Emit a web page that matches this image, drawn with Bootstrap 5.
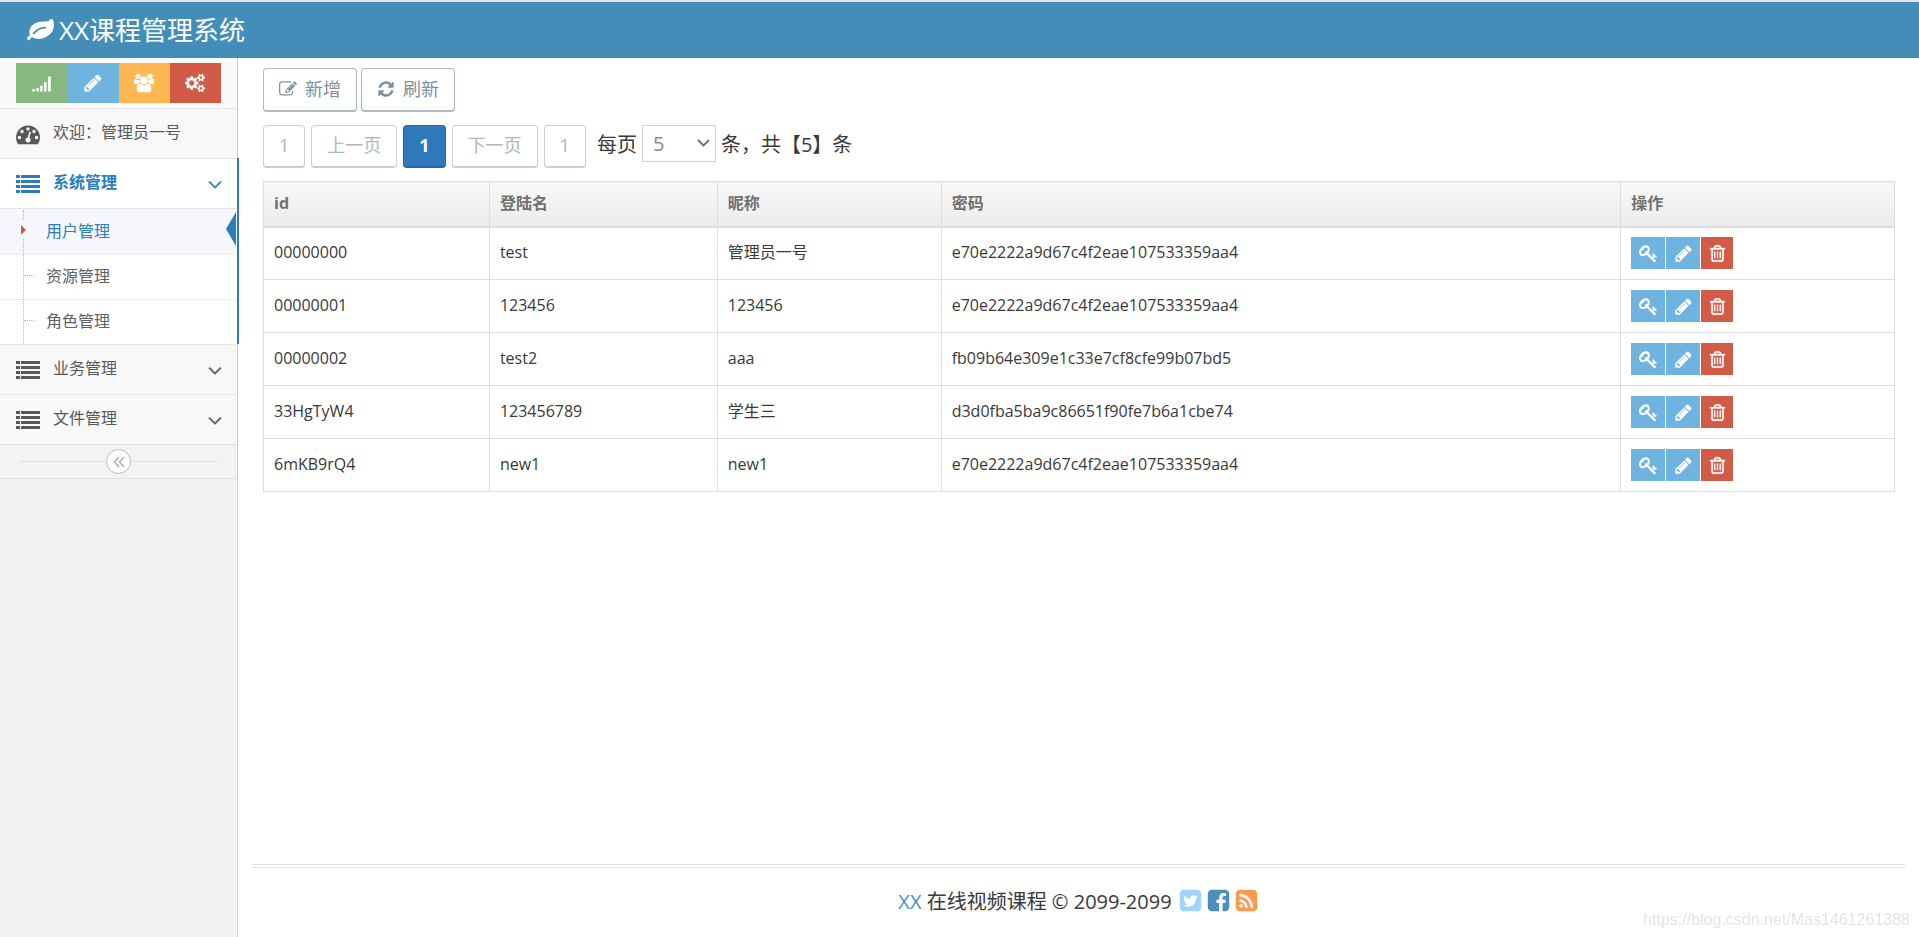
<!DOCTYPE html>
<html lang="zh-CN">
<head>
<meta charset="utf-8">
<meta name="viewport" content="width=device-width, initial-scale=1">
<title>XX课程管理系统</title>
<link href="https://cdn.jsdelivr.net/npm/bootstrap@5.3.0/dist/css/bootstrap.min.css" rel="stylesheet">
<style>
body{font-family:"Open Sans","Noto Sans CJK SC",sans-serif;font-size:16px;line-height:24px;color:#393939;background:#fff}
.ico{width:1em;height:1em;fill:currentColor;flex:none;display:block}
.topbar{background:#438eb9;border-top:2px solid #e4e6e9;height:58px;padding:0 27px}
.topbar .navbar-brand{font-size:26px;line-height:36px;color:#fff;gap:5px}
.topbar .ico{font-size:27px}

/* sidebar */
.side{width:238px;background:#f2f2f2;border-right:1px solid #ccc}
.shortcuts{background:#fafafa;padding:5px 16px;height:50px}
.shortcuts .btn{border:0;border-radius:0;color:#fff;font-size:20px}
.b-green{background:#87b87f}.b-blue{background:#6fb3e0}.b-orange{background:#ffb752}.b-red{background:#d15b47}
.side-link{height:50px;padding:0 16px;gap:13px;border-top:1px solid #e5e5e5;background:#f8f8f8;color:#585858;text-decoration:none}
.side-link span{padding-bottom:4px}
.side-link .ico{font-size:24px}
.side-link .caret{font-size:20px;margin-right:-4px}
.side-open{position:relative}
.side-open::after{content:"";position:absolute;top:0;bottom:0;right:-2px;width:2px;background:#2b7dbc}
.side-open>.side-link{background:#fff;color:#2b7dbc;font-weight:700}
.submenu{position:relative;background:#fff;border-top:1px solid #e5e5e5}
.submenu::before{content:"";position:absolute;left:23px;top:1px;bottom:0;border-left:1px dotted #9dbdd6;z-index:1}
.submenu a{position:relative;display:block;height:45px;line-height:42px;padding-left:46px;color:#616161;text-decoration:none;border-top:1px dotted #e4e4e4}
.submenu li:first-child a{border-top-color:transparent}
.submenu a::before{content:"";position:absolute;left:24px;top:20px;width:10px;border-top:1px dotted #9dbdd6}
.submenu a.current{background:#f5f7fa;color:#2b7dbc}
.submenu a.current::before{left:18px;top:11px;width:10px;height:18px;border:0;background:#f5f7fa;z-index:2}
.mark-red{position:absolute;left:21px;top:15px;width:5px;height:10px;background:#c86139;clip-path:polygon(0 0,100% 50%,0 100%);z-index:3}
.mark-blue{position:absolute;right:1px;top:2px;width:10px;height:34px;background:#2b7dbc;clip-path:polygon(100% 0,100% 100%,0 50%)}
.side-toggle{height:35px;background:#f3f3f3;border-top:1px solid #e0e0e0;border-bottom:1px solid #e0e0e0;padding:0 19px}
.side-toggle::before,.side-toggle::after{content:"";flex:1;border-top:1px solid #e0e0e0}
.side-toggle button{width:25px;height:25px;border:1px solid #bbb;border-radius:50%;background:#fff;color:#aaa;padding:0}
.side-toggle .ico{font-size:12px}

/* content */
.page{padding:10px 24px 0 25px}
.btn-plain{height:44px;border:1px solid #abbac3;border-bottom-width:2px;border-radius:4px;background:#fff;color:#80909a;font-size:18px;line-height:24px;padding:0 15px 2px}
.btn-plain:hover{background:#ebeef0;color:#80909a;border-color:#abbac3}
.btn-plain.disabled,.btn-plain:disabled{opacity:.65;background:#fff;color:#80909a;border-color:#abbac3}
.btn-plain.now{background:#2e79ba;border-color:#2668a2;color:#fff;font-weight:700}
.pager{gap:6px;margin-top:13px}
.pager .btn-plain{height:43px}
.per-page{font-size:20px;line-height:40px;margin-left:5px;gap:5px}
.per-page select{width:74px;height:37px;border:1px solid #d5d5d5;border-radius:0;color:#858585;font-size:20px;line-height:24px;padding:0 10px;background-position:right 5px center;background-size:13px 13px;
background-image:url("data:image/svg+xml,%3csvg xmlns='http://www.w3.org/2000/svg' viewBox='0 0 13 13'%3e%3cpath fill='none' stroke='%23777' stroke-width='2' d='M1 3l5.5 5.500L12 3'/%3e%3c/svg%3e")}
.grid-table{margin:13px 0 0;border-color:#ddd;color:#393939;table-layout:fixed;--bs-table-color:#393939}
.grid-table th{height:45px;padding:0 10px 2px;background:linear-gradient(#f8f8f8,#ececec);color:#707070;font-weight:700;border-bottom:2px solid #ddd;vertical-align:middle}
.grid-table td{height:53px;padding:0 10px 2px;vertical-align:middle}
.grid-table td:last-child{padding-bottom:0}
.acts{gap:1px}
.acts .btn{width:34px;height:32px;border:0;border-radius:0;color:#fff;font-size:19px;padding:0}
.acts .b-red{width:32px}
.foot{margin:0 14px;border-top:4px double #e2e2e2;height:73px;padding-top:18px;font-size:20px;line-height:32px;gap:6px}
.foot b{font-weight:400;color:#478fca}
.foot .ico{font-size:25px}
.socials{gap:3px;padding-top:2px}
.watermark{position:fixed;right:9px;bottom:5px;font:16px/24px "Liberation Sans",sans-serif;color:#e4e4e4}
</style>
</head>
<body class="d-flex flex-column min-vh-100">
<svg class="d-none" aria-hidden="true">
<symbol id="i-leaf" viewBox="0 0 1792 1792"><path d="M1280 704q0-26-19-45t-45-19q-172 0-318 49.500t-259.500 134-235.500 219.500q-19 21-19 45 0 26 19 45t45 19q24 0 45-19 27-24 74-71t67-66q137-124 268.500-176t313.500-52q26 0 45-19t19-45zm512-198q0 95-20 193-46 224-184.500 383t-357.500 268q-214 108-438 108-148 0-286-47-15-5-88-42t-96-37q-16 0-39.500 32t-45 70-52.500 70-60 32q-43 0-63.500-17.500t-45.500-59.500q-2-4-6-11t-5.500-10-3-9.500-1.500-13.500q0-35 31-73.500t68-65.500 68-56 31-48q0-4-14-38t-16-44q-9-51-9-104 0-115 43.500-220t119-184.500 170.500-139 204-95.500q55-18 145-25.500t179.500-9 178.500-6 163.500-24 113.500-56.500l29.500-29.500 29.500-28 27-20 36.500-16 43.500-4.500q39 0 70.500 46t47.500 112 24 124 8 96z"/></symbol>
<symbol id="i-signal" viewBox="0 0 1792 1792"><path d="M32 1440h224v224H32zM382 1344h224v320H382zM732 1152h224v512H732zM1082 832h224v832h-224zM1432 320h256v1344h-256z"/></symbol>
<symbol id="i-pencil" viewBox="0 0 1792 1792"><path d="M491 1536l91-91-235-235-91 91v107h128v128h107zm523-928q0-22-22-22-10 0-17 7l-542 542q-7 7-7 17 0 22 22 22 10 0 17-7l542-542q7-7 7-17zm-54-192l416 416-832 832h-416v-416zm683 96q0 53-37 90l-166 166-416-416 166-165q36-38 90-38 53 0 91 38l235 234q37 39 37 91z"/></symbol>
<symbol id="i-users" viewBox="0 0 1920 1792"><path d="M593 896q-162 5-265 128h-134q-82 0-138-40.500t-56-118.500q0-353 124-353 6 0 43.500 21t97.500 42.500 119 21.500q67 0 133-23-5 37-5 66 0 159 93 293zm1071 637q0 120-73 189.500t-194 69.500h-874q-121 0-194-69.500t-73-189.500q0-53 3.500-103.500t14-109 26.500-108.500 43-97.500 62-81 85.500-53.500 111.500-20q10 0 43 21.500t73 48 107 48 135 21.500 135-21.500 107-48 73-48 43-21.500q61 0 111.500 20t85.500 53.500 62 81 43 97.500 26.500 108.500 14 109 3.500 103.500zm-1024-1277q0 106-75 181t-181 75-181-75-75-181 75-181 181-75 181 75 75 181zm704 384q0 159-112.500 271.500t-271.500 112.500-271.500-112.500-112.500-271.500 112.500-271.500 271.500-112.500 271.500 112.500 112.500 271.500zm576 225q0 78-56 118.500t-138 40.500h-134q-103-123-265-128 93-134 93-293 0-29-5-66 66 23 133 23 59 0 119-21.500t97.500-42.500 43.500-21q124 0 124 353zm-128-609q0 106-75 181t-181 75-181-75-75-181 75-181 181-75 181 75 75 181z"/></symbol>
<symbol id="i-cogs" viewBox="0 0 1920 1792"><path d="M896 896q0-106-75-181t-181-75-181 75-75 181 75 181 181 75 181-75 75-181zm768 512q0-52-38-90t-90-38-90 38-38 90q0 53 37.500 90.500t90.500 37.500 90.500-37.500 37.500-90.500zm0-1024q0-52-38-90t-90-38-90 38-38 90q0 53 37.500 90.500t90.500 37.500 90.500-37.500 37.500-90.500zm-384 421v185q0 10-7 19.500t-16 10.500l-155 24q-11 35-32 76 34 48 90 115 7 11 7 20 0 12-7 19-23 30-82.500 89.500t-78.500 59.500q-11 0-21-7l-115-90q-37 19-77 31-11 108-23 155-7 24-30 24h-186q-11 0-20-7.500t-10-17.500l-23-153q-34-10-75-31l-118 89q-7 7-20 7-11 0-21-8-144-133-144-160 0-9 7-19 10-14 41-53t47-61q-23-44-35-82l-152-24q-10-1-17-9.500t-7-19.500v-185q0-10 7-19.500t16-10.500l155-24q11-35 32-76-34-48-90-115-7-11-7-20 0-12 7-20 22-30 82-89t79-59q11 0 21 7l115 90q34-18 77-32 11-108 23-154 7-24 30-24h186q11 0 20 7.500t10 17.500l23 153q34 10 75 31l118-89q8-7 20-7 11 0 21 8 144 133 144 160 0 8-7 19-12 16-42 54t-45 60q23 48 34 82l152 23q10 2 17 10.500t7 19.500zm640 533v140q0 16-149 31-12 27-30 52 51 113 51 138 0 4-4 7-122 71-124 71-8 0-46-47t-52-68q-20 2-30 2t-30-2q-14 21-52 68t-46 47q-2 0-124-71-4-3-4-7 0-25 51-138-18-25-30-52-149-15-149-31v-140q0-16 149-31 13-29 30-52-51-113-51-138 0-4 4-7 4-2 35-20t59-34 30-16q8 0 46 46.500t52 67.500q20-2 30-2t30 2q51-71 92-112l6-2q4 0 124 70 4 3 4 7 0 25-51 138 17 23 30 52 149 15 149 31zm0-1024v140q0 16-149 31-12 27-30 52 51 113 51 138 0 4-4 7-122 71-124 71-8 0-46-47t-52-68q-20 2-30 2t-30-2q-14 21-52 68t-46 47q-2 0-124-71-4-3-4-7 0-25 51-138-18-25-30-52-149-15-149-31v-140q0-16 149-31 13-29 30-52-51-113-51-138 0-4 4-7 4-2 35-20t59-34 30-16q8 0 46 46.500t52 67.500q20-2 30-2t30 2q51-71 92-112l6-2q4 0 124 70 4 3 4 7 0 25-51 138 17 23 30 52 149 15 149 31z"/></symbol>
<symbol id="i-gauge" viewBox="0 0 1792 1792"><path d="M384 1152q0-53-37.500-90.500t-90.500-37.500-90.500 37.500-37.500 90.500 37.500 90.500 90.500 37.500 90.500-37.500 37.500-90.500zm192-448q0-53-37.500-90.500t-90.500-37.500-90.500 37.500-37.500 90.500 37.500 90.500 90.500 37.500 90.500-37.500 37.500-90.500zm428 481l101-382q6-26-7.500-48.500t-38.500-29.500-48 6.500-30 39.500l-101 382q-60 5-107 43.500t-63 98.500q-20 77 20 146t117 89 146-20 89-117q16-60-6-117t-72-91zm660-33q0-53-37.500-90.500t-90.500-37.500-90.500 37.500-37.500 90.500 37.500 90.500 90.500 37.500 90.500-37.500 37.500-90.500zm-640-640q0-53-37.500-90.500t-90.500-37.500-90.500 37.500-37.500 90.500 37.500 90.500 90.500 37.500 90.500-37.500 37.500-90.500zm448 192q0-53-37.500-90.500t-90.500-37.500-90.500 37.500-37.500 90.500 37.500 90.500 90.500 37.500 90.500-37.500 37.500-90.500zm320 448q0 261-141 483-19 29-54 29h-1402q-35 0-54-29-141-221-141-483 0-182 71-348t191-286 286-191 348-71 348 71 286 191 191 286 71 348z"/></symbol>
<symbol id="i-list" viewBox="0 0 24 24"><path d="M0 3h4v3H0zm5 0h19v3H5zM0 8h4v3H0zm5 0h19v3H5zM0 13h4v3H0zm5 0h19v3H5zM0 18h4v3H0zm5 0h19v3H5z"/></symbol>
<symbol id="i-down" viewBox="0 0 1792 1792"><path d="M1450 736q0 13-10 23l-521 521q-10 10-23 10t-23-10l-521-521q-10-10-10-23t10-23l50-50q10-10 23-10t23 10l448 448 448-448q10-10 23-10t23 10l50 50q10 10 10 23z" stroke="currentColor" stroke-width="40"/></symbol>
<symbol id="i-dleft" viewBox="0 0 12 12"><path d="M6 1L1.500 6 6 11M11 1L6.500 6 11 11" fill="none" stroke="currentColor" stroke-width="1.400"/></symbol>
<symbol id="i-edit" viewBox="0 0 1792 1792"><path d="M888 1184l116-116-152-152-116 116v56h96v96h56zm440-720q-16-16-33 1l-350 350q-17 17-1 33t33-1l350-350q17-17 1-33zm80 594v190q0 119-84.500 203.500t-203.500 84.500h-832q-119 0-203.500-84.500t-84.500-203.500v-832q0-119 84.500-203.500t203.500-84.500h832q63 0 117 25 15 7 18 23 3 17-9 29l-49 49q-14 14-32 8-23-6-45-6h-832q-66 0-113 47t-47 113v832q0 66 47 113t113 47h832q66 0 113-47t47-113v-126q0-13 9-22l64-64q15-15 35-7t20 29zm-96-738l288 288-672 672h-288v-288zm444 132l-92 92-288-288 92-92q28-28 68-28t68 28l152 152q28 28 28 68t-28 68z"/></symbol>
<symbol id="i-refresh" viewBox="0 0 1792 1792"><path d="M1639 1056q0 5-1 7-64 268-268 434.500t-478 166.500q-146 0-282.500-55t-243.500-157l-129 129q-19 19-45 19t-45-19-19-45v-448q0-26 19-45t45-19h448q26 0 45 19t19 45-19 45l-137 137q71 66 161 102t187 36q134 0 250-65t186-179q11-17 53-117 8-23 30-23h192q13 0 22.500 9.500t9.500 22.500zm25-800v448q0 26-19 45t-45 19h-448q-26 0-45-19t-19-45 19-45l138-138q-148-137-349-137-134 0-250 65t-186 179q-11 17-53 117-8 23-30 23h-199q-13 0-22.500-9.500t-9.500-22.500v-7q65-268 270-434.500t480-166.500q146 0 284 55.500t245 156.500l130-129q19-19 45-19t45 19 19 45z"/></symbol>
<symbol id="i-key" viewBox="0 0 1792 1792"><path d="M832 512q0-80-56-136t-136-56-136 56-56 136q0 42 19 83-41-19-83-19-80 0-136 56t-56 136 56 136 136 56 136-56 56-136q0-42-19-83 41 19 83 19 80 0 136-56t56-136zm851 704q0 17-49 66t-66 49q-9 0-28.500-16t-36.500-33-38.500-40-24.500-26l-96 96 220 220q28 28 28 68 0 42-39 81t-81 39q-40 0-68-28l-671-671q-176 131-365 131-163 0-265.500-102.500t-102.500-265.500q0-160 95-313t248-248 313-95q163 0 265.500 102.500t102.500 265.500q0 189-131 365l355 355 96-96q-3-3-26-24.500t-40-38.500-33-36.500-16-28.500q0-17 49-66t66-49q13 0 23 10 6 6 46 44.500t82 79.500 86.500 86 73 78 28.500 41z"/></symbol>
<symbol id="i-trash" viewBox="0 0 1792 1792"><path d="M576 704h128v640H576zM832 704h128v640H832zM1088 704h128v640h-128z"/><path d="M1344 1460v-948h-896v948q0 22 7 40.500t14.500 27 10.500 8.500h832q3 0 10.500-8.500t14.500-27 7-40.500zm-672-1076h448l-48-117q-7-9-17-11h-317q-10 2-17 11zm928 32v64q0 14-9 23t-23 9h-96v948q0 83-47 143.500t-113 60.500h-832q-66 0-113-58.500t-47-141.500v-952h-96q-14 0-23-9t-9-23v-64q0-14 9-23t23-9h309l70-167q15-37 54-63t79-26h320q40 0 79 26t54 63l70 167h309q14 0 23 9t9 23z" stroke="currentColor" stroke-width="40"/></symbol>
<symbol id="i-twitter" viewBox="0 0 1792 1792"><path d="M1408 610q-56 25-121 34 68-40 93-117-65 38-134 51-61-66-153-66-87 0-148.500 61.500t-61.500 148.500q0 29 5 48-129-7-242-65t-192-155q-29 50-29 106 0 114 91 175-47-1-100-26v2q0 75 50 133.500t123 72.500q-29 8-51 8-13 0-39-4 21 63 74.500 104t121.500 42q-116 90-261 90-26 0-50-3 148 94 322 94 112 0 210-35.500t168-95 120.500-137 75-162 24.500-168.500q0-18-1-27 63-45 105-109zm256-194v960q0 119-84.500 203.500t-203.500 84.500h-960q-119 0-203.500-84.500t-84.500-203.500v-960q0-119 84.500-203.500t203.500-84.500h960q119 0 203.500 84.500t84.500 203.500z"/></symbol>
<symbol id="i-facebook" viewBox="0 0 1792 1792"><path d="M1376 128q119 0 203.500 84.500t84.500 203.500v960q0 119-84.500 203.500t-203.500 84.500h-188v-595h199l30-232h-229v-148q0-56 23.500-84t91.500-28l122-1v-207q-63-9-178-9-136 0-217.500 80t-81.500 226v171h-200v232h200v595h-532q-119 0-203.500-84.500t-84.500-203.500v-960q0-119 84.500-203.500t203.500-84.500h960z"/></symbol>
<symbol id="i-rss" viewBox="0 0 1792 1792"><path d="M640 1280q0-53-37.500-90.500t-90.500-37.500-90.500 37.500-37.500 90.500 37.500 90.500 90.500 37.500 90.500-37.500 37.500-90.500zm351 94q-13-232-177-396t-396-177q-14-1-24 9t-10 23v128q0 13 8.500 22t21.500 10q154 11 264 121t121 264q1 13 10 21.500t22 8.500h128q13 0 23-10t9-24zm384 1q-5-154-56-297.500t-139.500-260-205-205-260-139.500-297.500-56q-14-1-23 9-10 10-10 23v128q0 13 9 22t22 10q204 7 378 111.500t278.500 278.500 111.500 378q1 13 10 22t22 9h128q13 0 23-10 11-9 9-23zm289-959v960q0 119-84.500 203.500t-203.500 84.500h-960q-119 0-203.500-84.500t-84.500-203.500v-960q0-119 84.500-203.500t203.500-84.500h960q119 0 203.500 84.500t84.500 203.500z"/></symbol>
</svg>

<header class="topbar d-flex align-items-center">
  <a class="navbar-brand d-flex align-items-center m-0 p-0" href="#"><svg class="ico"><use href="#i-leaf"/></svg><span>XX课程管理系统</span></a>
</header>

<div class="d-flex flex-grow-1">
  <nav class="side flex-shrink-0" aria-label="主菜单">
    <div class="shortcuts d-flex">
      <button type="button" class="btn b-green flex-fill d-flex align-items-center justify-content-center p-0" aria-label="统计"><svg class="ico"><use href="#i-signal"/></svg></button>
      <button type="button" class="btn b-blue flex-fill d-flex align-items-center justify-content-center p-0" aria-label="编辑"><svg class="ico"><use href="#i-pencil"/></svg></button>
      <button type="button" class="btn b-orange flex-fill d-flex align-items-center justify-content-center p-0" aria-label="用户"><svg class="ico"><use href="#i-users"/></svg></button>
      <button type="button" class="btn b-red flex-fill d-flex align-items-center justify-content-center p-0" aria-label="设置"><svg class="ico"><use href="#i-cogs"/></svg></button>
    </div>
    <ul class="list-unstyled m-0">
      <li><a class="side-link d-flex align-items-center" href="#"><svg class="ico"><use href="#i-gauge"/></svg><span>欢迎：管理员一号</span></a></li>
      <li class="side-open">
        <a class="side-link d-flex align-items-center" href="#"><svg class="ico"><use href="#i-list"/></svg><span class="flex-grow-1">系统管理</span><svg class="ico caret"><use href="#i-down"/></svg></a>
        <ul class="submenu list-unstyled m-0">
          <li><a class="current" href="#"><i class="mark-red"></i>用户管理<i class="mark-blue"></i></a></li>
          <li><a href="#">资源管理</a></li>
          <li><a href="#">角色管理</a></li>
        </ul>
      </li>
      <li><a class="side-link d-flex align-items-center" href="#"><svg class="ico"><use href="#i-list"/></svg><span class="flex-grow-1">业务管理</span><svg class="ico caret"><use href="#i-down"/></svg></a></li>
      <li><a class="side-link d-flex align-items-center" href="#"><svg class="ico"><use href="#i-list"/></svg><span class="flex-grow-1">文件管理</span><svg class="ico caret"><use href="#i-down"/></svg></a></li>
    </ul>
    <div class="side-toggle d-flex align-items-center">
      <button type="button" class="d-flex align-items-center justify-content-center" aria-label="收起菜单"><svg class="ico"><use href="#i-dleft"/></svg></button>
    </div>
  </nav>

  <div class="flex-grow-1 d-flex flex-column">
    <main class="page flex-grow-1">
      <div class="d-flex gap-1">
        <button type="button" class="btn btn-plain d-flex align-items-center gap-2"><svg class="ico"><use href="#i-edit"/></svg>新增</button>
        <button type="button" class="btn btn-plain d-flex align-items-center gap-2"><svg class="ico"><use href="#i-refresh"/></svg>刷新</button>
      </div>
      <div class="pager d-flex align-items-start">
        <button type="button" class="btn btn-plain" disabled>1</button>
        <button type="button" class="btn btn-plain" disabled>上一页</button>
        <button type="button" class="btn btn-plain now">1</button>
        <button type="button" class="btn btn-plain" disabled>下一页</button>
        <button type="button" class="btn btn-plain" disabled>1</button>
        <div class="per-page d-flex">
          <label for="size">每页</label>
          <select id="size" class="form-select"><option>5</option><option>10</option><option>20</option></select>
          <span>条，共【5】条</span>
        </div>
      </div>
      <table class="grid-table table table-bordered">
        <colgroup><col style="width:13.85%"><col style="width:13.97%"><col style="width:13.73%"><col style="width:41.67%"><col style="width:16.78%"></colgroup>
        <thead><tr><th>id</th><th>登陆名</th><th>昵称</th><th>密码</th><th>操作</th></tr></thead>
        <tbody id="rows"></tbody>
      </table>
    </main>
    <footer class="foot d-flex justify-content-center align-items-start">
      <span><b>XX</b> 在线视频课程 © 2099-2099</span>
      <span class="socials d-flex">
        <a href="#" aria-label="Twitter" style="color:#a0d3ff"><svg class="ico"><use href="#i-twitter"/></svg></a>
        <a href="#" aria-label="Facebook" style="color:#4c8fbd"><svg class="ico"><use href="#i-facebook"/></svg></a>
        <a href="#" aria-label="RSS" style="color:#ff994c"><svg class="ico"><use href="#i-rss"/></svg></a>
      </span>
    </footer>
  </div>
</div>
<div class="watermark">https://blog.csdn.net/Mas1461261388</div>

<script src="https://cdn.jsdelivr.net/npm/bootstrap@5.3.0/dist/js/bootstrap.bundle.min.js"></script>
<script>
const users = [
  ["00000000", "test", "管理员一号", "e70e2222a9d67c4f2eae107533359aa4"],
  ["00000001", "123456", "123456", "e70e2222a9d67c4f2eae107533359aa4"],
  ["00000002", "test2", "aaa", "fb09b64e309e1c33e7cf8cfe99b07bd5"],
  ["33HgTyW4", "123456789", "学生三", "d3d0fba5ba9c86651f90fe7b6a1cbe74"],
  ["6mKB9rQ4", "new1", "new1", "e70e2222a9d67c4f2eae107533359aa4"]
];
const act = (icon, tone, name) => `<button type="button" class="btn ${tone} d-flex align-items-center justify-content-center" aria-label="${name}"><svg class="ico"><use href="#${icon}"/></svg></button>`;
document.getElementById("rows").innerHTML = users.map(u =>
  `<tr>${u.map(v => `<td>${v}</td>`).join("")}<td><div class="acts d-flex">${act("i-key", "b-blue", "重置密码")}${act("i-pencil", "b-blue", "编辑")}${act("i-trash", "b-red", "删除")}</div></td></tr>`).join("");
</script>
</body>
</html>
